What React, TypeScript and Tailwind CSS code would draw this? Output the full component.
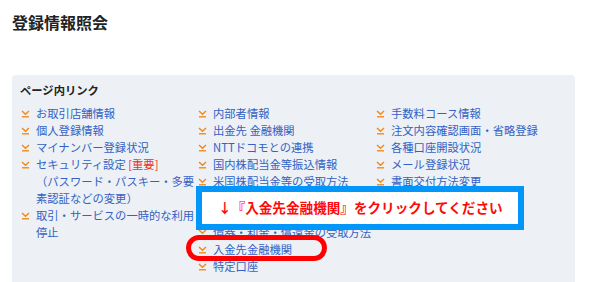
import React from "react";

const Icon = () => (
  <svg width="9" height="8" viewBox="0 0 9 8" className="shrink-0 mt-[5px]">
    <path d="M1 1 L4.5 4.2 L8 1" fill="none" stroke="#f08a1c" strokeWidth="1.5" />
    <path d="M1 6.8 H8" fill="none" stroke="#f08a1c" strokeWidth="1.4" />
  </svg>
);

const Link = ({ children }: { children: React.ReactNode }) => (
  <div className="flex">
    <div className="w-[16px] shrink-0 pl-[1px]">
      <Icon />
    </div>
    <div className="w-[161px] text-[#3361c4]">{children}</div>
  </div>
);

export default function App() {
  const mid = [
    "内部者情報",
    "出金先 金融機関",
    "NTTドコモとの連携",
    "国内株配当金等振込情報",
    "米国株配当金等の受取方法",
    "投資信託分配金の受取方法",
    "外国株式配当金の受取方法",
    "債券・利金・償還金の受取方法",
    "入金先金融機関",
    "特定口座",
  ];
  const right = [
    "手数料コース情報",
    "注文内容確認画面・省略登録",
    "各種口座開設状況",
    "メール登録状況",
    "書面交付方法変更",
    "電子交付サービス",
  ];
  return (
    <div
      className="relative w-[600px] h-[282px] overflow-hidden bg-white"
      style={{ fontFamily: '"Noto Sans CJK JP", "Noto Sans", sans-serif' }}
    >
      <div className="px-[12px] pt-[13px] text-[16px] leading-[18px] font-bold text-[#222]">
        登録情報照会
      </div>
      <div className="mx-[12px] w-[563px] mt-[44px] h-[260px] rounded-[4px] bg-[#edf1f5] pl-[8px] pt-[7px]">
        <div className="text-[11.3px] leading-[17px] font-bold text-[#222]">ページ内リンク</div>
        <div className="mt-[6px] grid grid-cols-[177px_178px_1fr] text-[11.3px] leading-[17px]">
          <div className="flex flex-col">
            <Link>お取引店舗情報</Link>
            <Link>個人登録情報</Link>
            <Link>マイナンバー登録状況</Link>
            <Link>
              セキュリティ設定 <span className="text-[#e8302a]">[重要]</span>
              <br />
              （パスワード・パスキー・多要素認証などの変更）
            </Link>
            <Link>取引・サービスの一時的な利用停止</Link>
          </div>
          <div className="flex flex-col">
            {mid.map((t) => (
              <Link key={t}>{t}</Link>
            ))}
          </div>
          <div className="flex flex-col">
            {right.map((t) => (
              <Link key={t}>{t}</Link>
            ))}
          </div>
        </div>
      </div>

      <div className="absolute left-[196px] top-[186px] w-[328px] h-[44px] border-[6px] border-[#0096fa] bg-white flex items-center pl-[16px]">
        <span className="text-[13.6px] font-bold text-[#ff0a0a] leading-none whitespace-nowrap">
          ↓『入金先金融機関』をクリックしてください
        </span>
      </div>
      <div className="absolute left-[186px] top-[235px] w-[141px] h-[26px] border-[5px] border-[#ff0000] rounded-[13px]" />
    </div>
  );
}
